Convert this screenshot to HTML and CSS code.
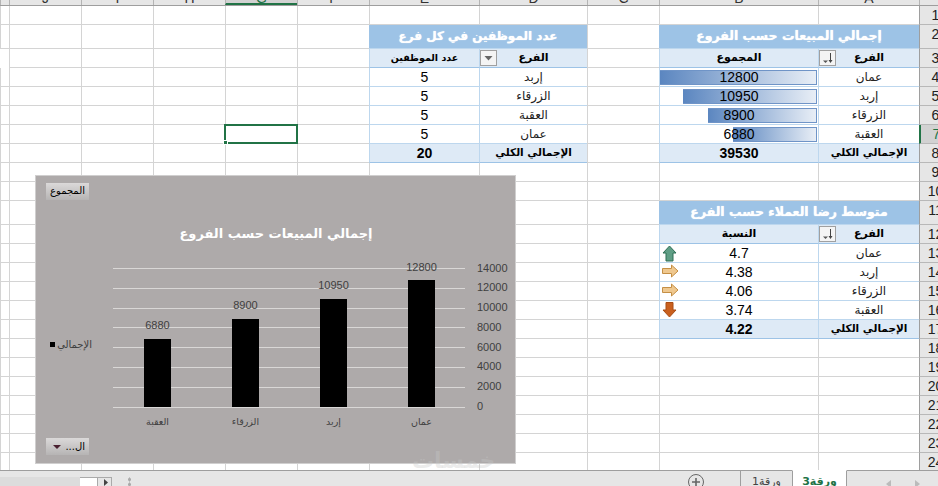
FILE: index.html
```html
<!DOCTYPE html>
<html lang="ar">
<head>
<meta charset="utf-8">
<title>Sheet</title>
<link rel="stylesheet" href="styles.css">
</head>
<body>
<div class="app">
  <div class="row colhead">
    <div class="hc"></div><div class="hc">A</div><div class="hc">B</div><div class="hc">C</div><div class="hc">D</div><div class="hc">E</div><div class="hc">F</div><div class="hc sel">G</div><div class="hc">H</div><div class="hc">I</div><div class="hc">J</div><div class="hc"></div>
  </div>
  <div class="sheet">
    <div class="row"><div class="rh"><span>1</span></div><div class="c"></div><div class="c"></div><div class="c"></div><div class="c"></div><div class="c"></div><div class="c"></div><div class="c"></div><div class="c"></div><div class="c"></div><div class="c"></div><div class="c"></div></div>
    <div class="row tall"><div class="rh"><span>2</span></div><div class="c title s2">إجمالي المبيعات حسب الفروع</div><div class="c"></div><div class="c title s2 small">عدد الموظفين في كل فرع</div><div class="c"></div><div class="c"></div><div class="c"></div><div class="c"></div><div class="c"></div><div class="c"></div></div>
    <div class="row"><div class="rh"><span>3</span></div><div class="c head">الفرع<span class="fbtn"><svg width="15" height="14" viewBox="0 0 15 14"><path d="M3 9.500h5L5.500 12z" fill="#555"/><path d="M10.500 2v9" stroke="#444"/><path d="M8.500 9h4l-2 3z" fill="#444"/></svg></span></div><div class="c head">المجموع</div><div class="c"></div><div class="c head">الفرع<span class="fbtn"><svg width="15" height="14" viewBox="0 0 15 14"><path d="M3.500 5h8l-4 4.500z" fill="#666"/></svg></span></div><div class="c head narrow">عدد الموظفين</div><div class="c"></div><div class="c"></div><div class="c"></div><div class="c"></div><div class="c"></div></div>
    <div class="row"><div class="rh"><span>4</span></div><div class="c d ar">عمان</div><div class="c d num"><span class="bar" style="width:157px"></span><span class="v">12800</span></div><div class="c"></div><div class="c d ar">إربد</div><div class="c d num">5</div><div class="c"></div><div class="c"></div><div class="c"></div><div class="c"></div><div class="c"></div><div class="c"></div></div>
    <div class="row"><div class="rh"><span>5</span></div><div class="c d ar">إربد</div><div class="c d num"><span class="bar" style="width:134px"></span><span class="v">10950</span></div><div class="c"></div><div class="c d ar">الزرقاء</div><div class="c d num">5</div><div class="c"></div><div class="c"></div><div class="c"></div><div class="c"></div><div class="c"></div><div class="c"></div></div>
    <div class="row"><div class="rh"><span>6</span></div><div class="c d ar">الزرقاء</div><div class="c d num"><span class="bar" style="width:109px"></span><span class="v">8900</span></div><div class="c"></div><div class="c d ar">العقبة</div><div class="c d num">5</div><div class="c"></div><div class="c"></div><div class="c"></div><div class="c"></div><div class="c"></div><div class="c"></div></div>
    <div class="row"><div class="rh cur"><span>7</span></div><div class="c d ar">العقبة</div><div class="c d num"><span class="bar" style="width:84px"></span><span class="v">6880</span></div><div class="c"></div><div class="c d ar">عمان</div><div class="c d num">5</div><div class="c"></div><div class="c active"><i class="handle"></i></div><div class="c"></div><div class="c"></div><div class="c"></div><div class="c"></div></div>
    <div class="row"><div class="rh"><span>8</span></div><div class="c total ar">الإجمالي الكلي</div><div class="c total num">39530</div><div class="c"></div><div class="c total ar">الإجمالي الكلي</div><div class="c total num">20</div><div class="c"></div><div class="c"></div><div class="c"></div><div class="c"></div><div class="c"></div><div class="c"></div></div>
    <div class="row"><div class="rh"><span>9</span></div><div class="c"></div><div class="c"></div><div class="c"></div><div class="c"></div><div class="c"></div><div class="c"></div><div class="c"></div><div class="c"></div><div class="c"></div><div class="c"></div><div class="c"></div></div>
    <div class="row"><div class="rh"><span>10</span></div><div class="c"></div><div class="c"></div><div class="c"></div><div class="c"></div><div class="c"></div><div class="c"></div><div class="c"></div><div class="c"></div><div class="c"></div><div class="c"></div><div class="c"></div></div>
    <div class="row tall"><div class="rh"><span>11</span></div><div class="c title s2">متوسط رضا العملاء حسب الفرع</div><div class="c"></div><div class="c"></div><div class="c"></div><div class="c"></div><div class="c"></div><div class="c"></div><div class="c"></div><div class="c"></div><div class="c"></div></div>
    <div class="row"><div class="rh"><span>12</span></div><div class="c head">الفرع<span class="fbtn"><svg width="15" height="14" viewBox="0 0 15 14"><path d="M3 9.500h5L5.500 12z" fill="#555"/><path d="M10.500 2v9" stroke="#444"/><path d="M8.500 9h4l-2 3z" fill="#444"/></svg></span></div><div class="c head">النسبة</div><div class="c"></div><div class="c"></div><div class="c"></div><div class="c"></div><div class="c"></div><div class="c"></div><div class="c"></div><div class="c"></div><div class="c"></div></div>
    <div class="row"><div class="rh"><span>13</span></div><div class="c d ar">عمان</div><div class="c d num"><svg class="ico" width="18" height="17" viewBox="0 0 18 17"><path d="M7.500 1 14 8h-3v8H4V8H1z" fill="#5f9e85" stroke="#2f6e55"/></svg>4.7</div><div class="c"></div><div class="c"></div><div class="c"></div><div class="c"></div><div class="c"></div><div class="c"></div><div class="c"></div><div class="c"></div><div class="c"></div></div>
    <div class="row"><div class="rh"><span>14</span></div><div class="c d ar">إربد</div><div class="c d num"><svg class="ico" width="18" height="17" viewBox="0 0 18 17"><path d="M.5 4.500h9V1l6.500 6-6.500 6V9.500H.5z" fill="#efc88f" stroke="#c58f45"/></svg>4.38</div><div class="c"></div><div class="c"></div><div class="c"></div><div class="c"></div><div class="c"></div><div class="c"></div><div class="c"></div><div class="c"></div><div class="c"></div></div>
    <div class="row"><div class="rh"><span>15</span></div><div class="c d ar">الزرقاء</div><div class="c d num"><svg class="ico" width="18" height="17" viewBox="0 0 18 17"><path d="M.5 4.500h9V1l6.500 6-6.500 6V9.500H.5z" fill="#efc88f" stroke="#c58f45"/></svg>4.06</div><div class="c"></div><div class="c"></div><div class="c"></div><div class="c"></div><div class="c"></div><div class="c"></div><div class="c"></div><div class="c"></div><div class="c"></div></div>
    <div class="row"><div class="rh"><span>16</span></div><div class="c d ar">العقبة</div><div class="c d num"><svg class="ico" width="18" height="17" viewBox="0 0 18 17"><path d="M7.500 15 1 8h3V.5h7V8h3z" fill="#c9601f" stroke="#a84c14"/></svg>3.74</div><div class="c"></div><div class="c"></div><div class="c"></div><div class="c"></div><div class="c"></div><div class="c"></div><div class="c"></div><div class="c"></div><div class="c"></div></div>
    <div class="row"><div class="rh"><span>17</span></div><div class="c total ar">الإجمالي الكلي</div><div class="c total num">4.22</div><div class="c"></div><div class="c"></div><div class="c"></div><div class="c"></div><div class="c"></div><div class="c"></div><div class="c"></div><div class="c"></div><div class="c"></div></div>
    <div class="row"><div class="rh"><span>18</span></div><div class="c"></div><div class="c"></div><div class="c"></div><div class="c"></div><div class="c"></div><div class="c"></div><div class="c"></div><div class="c"></div><div class="c"></div><div class="c"></div><div class="c"></div></div>
    <div class="row"><div class="rh"><span>19</span></div><div class="c"></div><div class="c"></div><div class="c"></div><div class="c"></div><div class="c"></div><div class="c"></div><div class="c"></div><div class="c"></div><div class="c"></div><div class="c"></div><div class="c"></div></div>
    <div class="row"><div class="rh"><span>20</span></div><div class="c"></div><div class="c"></div><div class="c"></div><div class="c"></div><div class="c"></div><div class="c"></div><div class="c"></div><div class="c"></div><div class="c"></div><div class="c"></div><div class="c"></div></div>
    <div class="row"><div class="rh"><span>21</span></div><div class="c"></div><div class="c"></div><div class="c"></div><div class="c"></div><div class="c"></div><div class="c"></div><div class="c"></div><div class="c"></div><div class="c"></div><div class="c"></div><div class="c"></div></div>
    <div class="row"><div class="rh"><span>22</span></div><div class="c"></div><div class="c"></div><div class="c"></div><div class="c"></div><div class="c"></div><div class="c"></div><div class="c"></div><div class="c"></div><div class="c"></div><div class="c"></div><div class="c"></div></div>
    <div class="row"><div class="rh"><span>23</span></div><div class="c"></div><div class="c"></div><div class="c"></div><div class="c"></div><div class="c"></div><div class="c"></div><div class="c"></div><div class="c"></div><div class="c"></div><div class="c"></div><div class="c"></div></div>
    <div class="row"><div class="rh"><span>24</span></div><div class="c"></div><div class="c"></div><div class="c"></div><div class="c"></div><div class="c"></div><div class="c"></div><div class="c"></div><div class="c"></div><div class="c"></div><div class="c"></div><div class="c"></div></div>

    <div class="chart">
      <svg class="plot" width="480" height="288" viewBox="35 175 480 288">
        <g stroke="#d9d7d6" stroke-width="1">
          <path d="M113 268.500H465M113 288.500H465M113 308.500H465M113 327.500H465M113 347.500H465M113 367.500H465M113 387.500H465M113 407.500H465"/>
        </g>
        <g fill="#000">
          <rect x="144" y="339" width="27" height="68"/>
          <rect x="232" y="319" width="27" height="88"/>
          <rect x="320" y="299" width="27" height="108"/>
          <rect x="408" y="280" width="27" height="127"/>
        </g>
        <g class="axis">
          <text x="477" y="272">14000</text><text x="477" y="291">12000</text><text x="477" y="311">10000</text><text x="477" y="331">8000</text><text x="477" y="351">6000</text><text x="477" y="370">4000</text><text x="477" y="390">2000</text><text x="477" y="410">0</text>
        </g>
        <g class="lab">
          <text x="157.500" y="329">6880</text><text x="245.500" y="309">8900</text><text x="333.500" y="289">10950</text><text x="421.500" y="271">12800</text>
        </g>
        <g class="cat">
          <text x="157.500" y="425">العقبة</text><text x="245.500" y="425">الزرقاء</text><text x="333.500" y="425">إربد</text><text x="421.500" y="425">عمان</text>
        </g>
        <text class="ctitle" x="276" y="238">إجمالي المبيعات حسب الفروع</text>
        <text class="leg" x="92" y="348">الإجمالي</text>
        <rect x="50" y="342" width="5" height="5" fill="#000"/>
      </svg>
      <div class="cbtn top">المجموع</div>
      <div class="cbtn bottom"><span class="caret"></span><span>ال...</span></div>
    </div>
  </div>
  <div class="tabs">
    <div class="navs">
      <svg width="5" height="8" viewBox="0 0 5 8"><path d="M5 0v8L0 4z" fill="#bbb"/></svg>
      <svg width="5" height="8" viewBox="0 0 5 8"><path d="M0 0v8l5-4z" fill="#bbb"/></svg>
    </div>
    <div class="tab on">ورقة3</div>
    <div class="tab">ورقة1</div>
    <svg class="plus" width="18" height="18" viewBox="0 0 18 18"><circle cx="9" cy="9" r="7.500" fill="none" stroke="#666"/><path d="M5 9h8M9 5v8" stroke="#666" stroke-width="1.600"/></svg>
    <div class="spring"></div>
    <span class="dots"></span>
    <div class="scroll"><svg width="13" height="9" viewBox="0 0 13 9"><path d="M6 1l4 3.500L6 8z" fill="#444"/></svg></div>
    <div class="thumb"></div>
    <div class="track"></div>
  </div>
  <div class="mark">خمسات</div>
</div>
</body>
</html>
```
FILE: styles.css
```css
* { box-sizing: border-box; }
html, body { margin: 0; padding: 0; background: #fff; }
body { font-family: "Liberation Sans", "DejaVu Sans", sans-serif; color: #000; }
.app { position: relative; width: 938px; height: 486px; overflow: hidden; display: flex; flex-direction: column; }
.row { display: grid; direction: rtl; grid-template-columns: 19px 101px 159px 72px 108px 110px 72px 72px 72px 72px 72px 9px; height: 19px; }
.row.tall { height: 24px; }
.colhead { height: 6px; flex: none; background: #e6e6e6; border-bottom: 1px solid #9e9e9e; overflow: hidden; }
.hc { border-left: 1px solid #b4b4b4; font-size: 14px; line-height: 16px; margin-top: -14px; height: 19px; padding-top: 4px; text-align: center; color: #333; }
.hc.sel { background: #d2d2d2; border-bottom: 2px solid #217346; color: #217346; }
.sheet { position: relative; flex: none; height: 464px; overflow: hidden; }
.c { position: relative; border-left: 1px solid #d4d4d4; border-bottom: 1px solid #d4d4d4; min-width: 0; }
.rh { background: #e6e6e6; border-bottom: 1px solid #b8b8b8; overflow: hidden; direction: ltr; font-size: 14px; line-height: 18px; color: #222; border-left: 1px solid #9e9e9e; white-space: nowrap; }
.rh span { display: block; width: 31px; text-align: center; }
.rh.cur { background: #d2d2d2; border-left: 2px solid #217346; color: #217346; }
.s2 { grid-column: span 2; }
.title { background: #9dc3e6; color: #fff; font: bold 12.500px/22px "DejaVu Sans", sans-serif; text-align: center; border: 0; border-bottom: 1px solid #bdd7ee; text-shadow: 0 0 1px #fff; }
.title.small { font-size: 12px; }
.head { background: #deeaf6; border-left: 1px solid #bdd7ee; border-bottom: 1px solid #9dc3e6; font: bold 11px/17px "DejaVu Sans", sans-serif; text-align: center; }
.head.narrow { font-size: 9.500px; }
.d { border-bottom: 1px solid #bdd7ee; border-left: 1px solid #bdd7ee; text-align: center; }
.ar { font: 12px/18px "DejaVu Sans", sans-serif; color: #222; }
.num { font: 14px/18px "Liberation Sans", sans-serif; }
.total { background: #deeaf6; border-bottom: 1px solid #9dc3e6; border-left: 1px solid #bdd7ee; text-align: center; font-weight: bold; }
.total.ar { font: bold 10.500px/17px "DejaVu Sans", sans-serif; color: #000; }
.total.num { font: bold 14px/18px "Liberation Sans", sans-serif; }
.fbtn { position: absolute; left: 0; top: 1px; width: 17px; height: 16px; background: #f4f4f4; border: 1px solid #a0a0a0; display: flex; align-items: center; justify-content: center; }
.bar { position: absolute; right: 1px; top: 2px; height: 15px; background: linear-gradient(to right, #5b86c0, #e8eef6); border: 1px solid #6f94c7; border-left: 0; }
.v { position: relative; }
.ico { position: absolute; left: 2px; top: 1px; }
.active { border: 2px solid #217346; margin: -1px -1px 0 -1px; z-index: 2; }
.handle { position: absolute; left: -3px; bottom: -3px; width: 5px; height: 5px; background: #217346; border: 1px solid #fff; }
.chart { position: absolute; left: 35px; top: 169px; width: 481px; height: 289px; background: #aeaaaa; border: 1px solid #d0cfcf; z-index: 3; }
.plot { display: block; margin: -1px 0 0 -1px; }
.plot text { font-family: "Liberation Sans", sans-serif; }
.axis text { font-size: 11px; fill: #404040; }
.lab text { font-size: 11px; fill: #404040; text-anchor: middle; }
.plot .cat text { font: 9.500px "DejaVu Sans", sans-serif; fill: #404040; text-anchor: middle; }
.plot .ctitle { font: bold 13px "DejaVu Sans", sans-serif; fill: #fff; text-anchor: middle; direction: rtl; }
.plot .leg { font: 10px "DejaVu Sans", sans-serif; fill: #404040; text-anchor: start; direction: rtl; }
.cbtn { position: absolute; left: 10px; width: 43px; height: 17px; background: linear-gradient(#dbd9d9, #b6b4b4); font: 10px/16px "DejaVu Sans", sans-serif; direction: rtl; text-align: center; color: #000; }
.cbtn.top { top: 7px; }
.cbtn.bottom { bottom: 8px; display: flex; justify-content: space-between; align-items: center; padding: 0 4px 0 7px; }
.caret { order: 2; width: 0; height: 0; border: 4px solid transparent; border-top: 4px solid #4a2030; border-bottom: 0; }
.tabs { flex: none; height: 16px; background: #e6e6e6; border-top: 1px solid #9e9e9e; display: flex; direction: rtl; position: relative; z-index: 4; }
.navs { width: 91px; flex: none; direction: ltr; display: flex; justify-content: space-between; align-items: flex-start; padding: 9px 18px 0 39px; }
.tab { width: 52px; margin-top: -1px; padding-top: 3px; font: 11px/16px "DejaVu Sans", sans-serif; text-align: center; color: #444; border-left: 1px solid #9e9e9e; overflow: hidden; border-top: 1px solid #9e9e9e; }
.tab.on { width: 55px; background: #fff; color: #217346; font-weight: bold; border-top-color: #fff; border-right: 1px solid #9e9e9e; }
.plus { margin: 2px 35px 0 0; }
.spring { flex: 1; }
.dots { width: 3px; margin: 6px 0 0 16px; height: 10px; background: radial-gradient(#aaa 1px, transparent 1.500px) 0 0/3px 5px; }
.scroll { width: 15px; margin-top: 6px; background: #e6e6e6; border: 1px solid #aaa; border-bottom: 0; }
.scroll svg { display: block; }
.thumb { width: 17px; margin-top: 6px; background: #fff; border-top: 1px solid #aaa; }
.track { width: 80px; margin-top: 6px; background: #dcdcdc; }
.mark { position: absolute; left: 412px; top: 448px; font: bold 22px "DejaVu Sans", sans-serif; color: rgba(200,200,200,.35); direction: rtl; z-index: 5; }
```
